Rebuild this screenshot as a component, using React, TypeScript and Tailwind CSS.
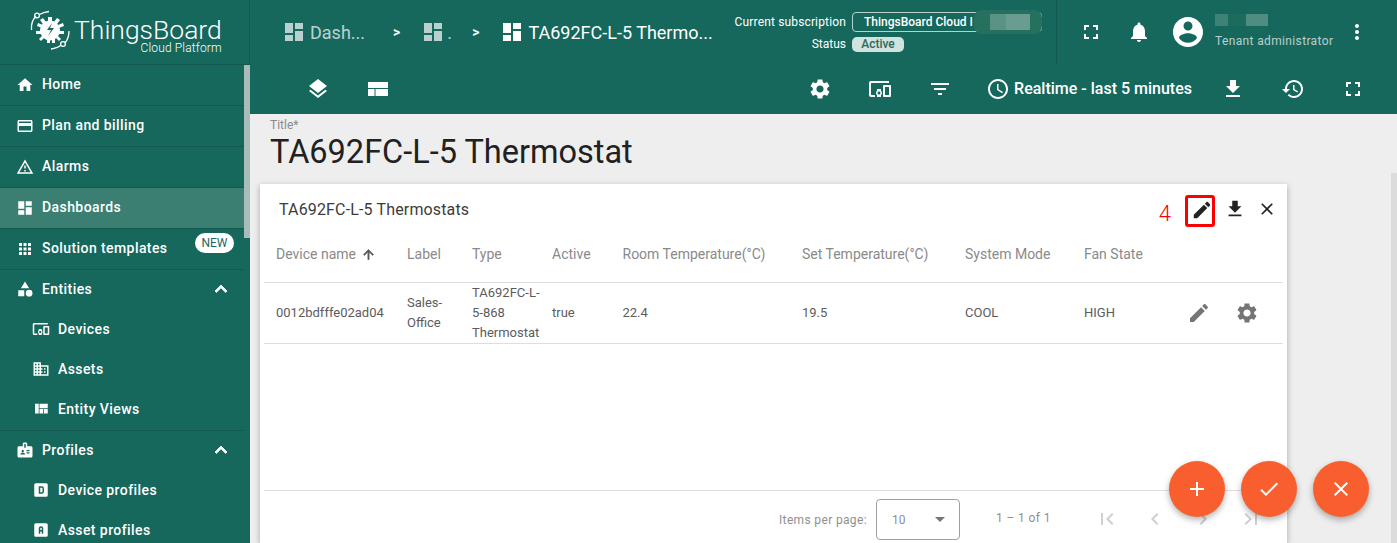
import React from "react";

const P = {
  home: "M10 20v-6h4v6h5v-8h3L12 3 2 12h3v8z",
  card: "M20 4H4c-1.11 0-1.99.89-1.99 2L2 18c0 1.11.89 2 2 2h16c1.11 0 2-.89 2-2V6c0-1.11-.89-2-2-2zm0 14H4v-6h16v6zm0-10H4V6h16v2z",
  warn: "M12 5.99L19.53 19H4.47L12 5.99M12 2L1 21h22L12 2zm1 14h-2v2h2v-2zm0-6h-2v4h2v-4z",
  dash: "M3 13h8V3H3v10zm0 8h8v-6H3v6zm10 0h8V11h-8v10zm0-18v6h8V3h-8z",
  grid: "M4 4h4v4H4zM10 4h4v4h-4zM16 4h4v4h-4zM4 10h4v4H4zM10 10h4v4h-4zM16 10h4v4h-4zM4 16h4v4H4zM10 16h4v4h-4zM16 16h4v4h-4z",
  category: "M12 2l-5.5 9h11zM17.5 13a4.5 4.5 0 1 0 0 9 4.5 4.5 0 0 0 0-9zM3 13.5h8v8H3z",
  devices: "M3 6h18V4H3c-1.1 0-2 .9-2 2v12c0 1.1.9 2 2 2h4v-2H3V6zm10 6H9v1.78c-.61.55-1 1.33-1 2.22s.39 1.67 1 2.22V20h4v-1.78c.61-.55 1-1.34 1-2.22s-.39-1.67-1-2.22V12zm-2 5.5c-.83 0-1.5-.67-1.5-1.5s.67-1.5 1.5-1.5 1.5.67 1.5 1.5-.67 1.5-1.5 1.5zM22 8h-6c-.5 0-1 .5-1 1v10c0 .5.5 1 1 1h6c.5 0 1-.5 1-1V9c0-.5-.5-1-1-1zm-1 10h-4v-8h4v8z",
  domain: "M12 7V3H2v18h20V7H12zM6 19H4v-2h2v2zm0-4H4v-2h2v2zm0-4H4V9h2v2zm0-4H4V5h2v2zm4 12H8v-2h2v2zm0-4H8v-2h2v2zm0-4H8V9h2v2zm0-4H8V5h2v2zm10 12h-8v-2h2v-2h-2v-2h2v-2h-2V9h8v10zm-2-8h-2v2h2v-2zm0 4h-2v2h2v-2z",
  quilt: "M10 18h5v-6h-5v6zm-6 0h5V5H4v13zm12 0h5v-6h-5v6zM10 5v6h11V5H10z",
  badge: "M20 7h-5V4c0-1.1-.9-2-2-2h-2c-1.1 0-2 .9-2 2v3H4c-1.1 0-2 .9-2 2v11c0 1.1.9 2 2 2h16c1.1 0 2-.9 2-2V9c0-1.1-.9-2-2-2zM9 12c.83 0 1.5.67 1.5 1.5S9.83 15 9 15s-1.5-.67-1.5-1.5S8.17 12 9 12zm3 6H6v-.75c0-1 2-1.5 3-1.5s3 .5 3 1.5V18zm1-9h-2V4h2v5zm5 7.5h-4V15h4v1.5zm0-3h-4V12h4v1.5z",
  profileD: "M5 3h14a2 2 0 0 1 2 2v14a2 2 0 0 1-2 2H5a2 2 0 0 1-2-2V5a2 2 0 0 1 2-2zm4 4v10h4a3 3 0 0 0 3-3v-4a3 3 0 0 0-3-3H9zm2 2h2a1 1 0 0 1 1 1v4a1 1 0 0 1-1 1h-2V9z",
  profileA: "M5 3h14a2 2 0 0 1 2 2v14a2 2 0 0 1-2 2H5a2 2 0 0 1-2-2V5a2 2 0 0 1 2-2zm7 4a3 3 0 0 0-3 3v7h2v-3h2v3h2v-7a3 3 0 0 0-3-3zm-1 5v-2a1 1 0 0 1 2 0v2h-2z",
  less: "M12 8l-6 6 1.41 1.41L12 10.83l4.59 4.58L18 14z",
  layers: "M11.99 18.54l-7.37-5.73L3 14.07l9 7 9-7-1.63-1.27-7.38 5.74zM12 16l7.36-5.73L21 9l-9-7-9 7 1.63 1.27L12 16z",
  layout: "M2 5h20v6H2zM2 12h6.5v7H2zM9.5 12H22v7H9.5z",
  settings: "M19.14 12.94c.04-.3.06-.61.06-.94 0-.32-.02-.64-.07-.94l2.03-1.58c.18-.14.23-.41.12-.61l-1.92-3.32c-.12-.22-.37-.29-.59-.22l-2.39.96c-.5-.38-1.03-.7-1.62-.94l-.36-2.54c-.04-.24-.24-.41-.48-.41h-3.84c-.24 0-.43.17-.47.41l-.36 2.54c-.59.24-1.13.57-1.62.94l-2.39-.96c-.22-.08-.47 0-.59.22L2.74 8.87c-.12.21-.08.47.12.61l2.03 1.58c-.05.3-.09.63-.09.94s.02.64.07.94l-2.03 1.58c-.18.14-.23.41-.12.61l1.92 3.32c.12.22.37.29.59.22l2.39-.96c.5.38 1.03.7 1.62.94l.36 2.54c.05.24.24.41.48.41h3.84c.24 0 .44-.17.47-.41l.36-2.54c.59-.24 1.13-.56 1.62-.94l2.39.96c.22.08.47 0 .59-.22l1.92-3.32c.12-.22.07-.47-.12-.61l-2.01-1.58zM12 15.6c-1.98 0-3.6-1.62-3.6-3.6s1.62-3.6 3.6-3.6 3.6 1.62 3.6 3.6-1.62 3.6-3.6 3.6z",
  filter: "M10 18h4v-2h-4v2zM3 6v2h18V6H3zm3 7h12v-2H6v2z",
  schedule: "M11.99 2C6.47 2 2 6.48 2 12s4.47 10 9.99 10C17.52 22 22 17.52 22 12S17.52 2 11.99 2zM12 20c-4.42 0-8-3.58-8-8s3.58-8 8-8 8 3.58 8 8-3.58 8-8 8zm.5-13H11v6l5.25 3.15.75-1.23-4.5-2.67z",
  download: "M19 9h-4V3H9v6H5l7 7 7-7zM5 18v2h14v-2H5z",
  history: "M13 3c-4.97 0-9 4.03-9 9H1l3.89 3.89.07.14L9 12H6c0-3.87 3.13-7 7-7s7 3.13 7 7-3.13 7-7 7c-1.93 0-3.68-.79-4.94-2.06l-1.42 1.42C8.27 19.99 10.51 21 13 21c4.97 0 9-4.03 9-9s-4.03-9-9-9zm-1 5v5l4.28 2.54.72-1.21-3.5-2.08V8H12z",
  fullscreen: "M7 14H5v5h5v-2H7v-3zm-2-4h2V7h3V5H5v5zm12 7h-3v2h5v-5h-2v3zM14 5v2h3v3h2V5h-5z",
  bell: "M12 22c1.1 0 2-.9 2-2h-4c0 1.1.89 2 2 2zm6-6v-5c0-3.07-1.64-5.64-4.5-6.32V4c0-.83-.67-1.5-1.5-1.5s-1.5.67-1.5 1.5v.68C7.63 5.36 6 7.92 6 11v5l-2 2v1h16v-1l-2-2z",
  account: "M12 2C6.48 2 2 6.48 2 12s4.48 10 10 10 10-4.48 10-10S17.52 2 12 2zm0 3c1.66 0 3 1.34 3 3s-1.34 3-3 3-3-1.34-3-3 1.34-3 3-3zm0 14.2c-2.5 0-4.71-1.28-6-3.22.03-1.99 4-3.08 6-3.08 1.99 0 5.97 1.09 6 3.08-1.29 1.94-3.5 3.22-6 3.22z",
  more: "M12 8c1.1 0 2-.9 2-2s-.9-2-2-2-2 .9-2 2 .9 2 2 2zm0 2c-1.1 0-2 .9-2 2s.9 2 2 2 2-.9 2-2-.9-2-2-2zm0 6c-1.1 0-2 .9-2 2s.9 2 2 2 2-.9 2-2-.9-2-2-2z",
  edit: "M3 17.25V21h3.75L17.81 9.94l-3.75-3.75L3 17.25zM20.71 7.04c.39-.39.39-1.02 0-1.41l-2.34-2.34c-.39-.39-1.02-.39-1.41 0l-1.83 1.83 3.75 3.75 1.83-1.83z",
  close: "M19 6.41L17.59 5 12 10.59 6.41 5 5 6.41 10.59 12 5 17.59 6.41 19 12 13.41 17.59 19 19 17.59 13.41 12z",
  add: "M19 13h-6v6h-2v-6H5v-2h6V5h2v6h6v2z",
  check: "M9 16.17L4.83 12l-1.42 1.41L9 19 21 7l-1.41-1.41z",
  up: "M4 12l1.41 1.41L11 7.83V20h2V7.83l5.58 5.59L20 12l-8-8-8 8z",
  first: "M18.41 16.59L13.82 12l4.59-4.59L17 6l-6 6 6 6zM6 6h2v12H6z",
  prev: "M15.41 7.41L14 6l-6 6 6 6 1.41-1.41L10.83 12z",
  next: "M10 6L8.59 7.41 13.17 12l-4.58 4.59L10 18l6-6z",
  last: "M5.59 7.41L10.18 12l-4.59 4.59L7 18l6-6-6-6zM16 6h2v12h-2z",
};

function Icon({ d, className }: { d: string; className: string }) {
  return (
    <svg viewBox="0 0 24 24" fill="currentColor" className={"shrink-0 " + className}>
      <path d={d} />
    </svg>
  );
}

function Logo() {
  return (
    <svg viewBox="0 0 40 41" className="w-[40px] h-[41px] shrink-0 text-white" fill="none" stroke="currentColor">
      <path d="M1.5 20 C1 14 3 9 6 6" strokeWidth="1.3" />
      <circle cx="7" cy="5.5" r="2.4" strokeWidth="1.3" />
      <path d="M9.5 4.5 C12 3 15 2 19 1.5" strokeWidth="1.3" />
      <path d="M39 21 C39 26 37.5 30 35 33" strokeWidth="1.3" />
      <circle cx="33" cy="34" r="2.4" strokeWidth="1.3" />
      <path d="M30.5 35.5 C28 37.5 24.5 38.5 21 39" strokeWidth="1.3" />
      <g stroke="none" fill="currentColor">
        <circle cx="20" cy="20.5" r="10" />
        <path d="M18 7h4v5h-4zM10 10l3-2 3 4-3 2zM27 8l3 2-3 4-3-2zM7 16l1-3 5 2-1 3zM33 13l1 3-5 2-1-3zM6 21h5v3H6zM29 21h5v3h-5zM9 29l4-4 2 2-4 4zM31 29l-4-4-2 2 4 4zM17 29h3v4h-3zM22 29h3v4h-3z" />
      </g>
      <path d="M22 13l-5 7h4l-3 6 6-8h-4l2-5z" fill="#16675c" stroke="none" />
    </svg>
  );
}

function NavRow({ icon, label, sub, border, active, chevron, badge }: { icon: string; label: string; sub?: boolean; border?: boolean; active?: boolean; chevron?: boolean; badge?: boolean }) {
  return (
    <div className={"relative flex items-center gap-2 text-[14px] tracking-[0.42px] font-medium text-white shrink-0 " + (sub ? "h-[40px] pl-8 pb-[2px] " : "pl-4 ") + (border ? "h-[41px] border-b border-[#125a50] pb-px " : !sub ? "h-[40px] pb-[2px] " : "") + (active ? "bg-[#3a7f72]" : "")}>
      <Icon d={icon} className="w-[18px] h-[18px]" />
      <span>{label}</span>
      {chevron && <Icon d={P.less} className="w-[24px] h-[24px] ml-auto mr-[11px] stroke-current stroke-[0.8]" />}
      {badge && (
        <span className="absolute left-[195px] top-[4px] h-[20px] w-[39px] rounded-full bg-white text-[#1b6a5f] text-[12px] tracking-normal font-normal flex items-center justify-center">NEW</span>
      )}
    </div>
  );
}

function ToolBtn({ d }: { d: string }) {
  return (
    <div className="w-[60px] h-[50px] flex items-center justify-center">
      <Icon d={d} className="w-[24px] h-[24px]" />
    </div>
  );
}

const COLS = "grid grid-cols-[131px_65px_80px_70.5px_179.5px_163px_119px_1fr] pl-3";

export default function App() {
  return (
    <div className="relative flex w-[1397px] h-[543px] overflow-hidden bg-[#eeeeee] text-[#333] font-['Roboto',sans-serif]">
      {/* Sidebar */}
      <aside className="w-[250px] shrink-0 bg-[#16675c] flex flex-col text-white">
        <div className="h-[65px] shrink-0 border-b border-r border-[#125a50] flex items-start pl-[30px] pt-[10px] gap-[4px]">
          <Logo />
          <div className="flex flex-col items-end pt-[8px]">
            <span className="text-[26.5px] leading-[24px] font-light whitespace-nowrap">ThingsBoard</span>
            <span className="text-[12px] leading-[12px] font-light tracking-[0.15px] whitespace-nowrap">Cloud Platform</span>
          </div>
        </div>
        <div className="flex flex-1 min-h-0">
          <nav className="w-[244px] flex flex-col overflow-hidden">
            <NavRow icon={P.home} label="Home" border />
            <NavRow icon={P.card} label="Plan and billing" border />
            <NavRow icon={P.warn} label="Alarms" border />
            <NavRow icon={P.dash} label="Dashboards" border active />
            <NavRow icon={P.grid} label="Solution templates" border badge />
            <NavRow icon={P.category} label="Entities" chevron />
            <NavRow icon={P.devices} label="Devices" sub />
            <NavRow icon={P.domain} label="Assets" sub />
            <NavRow icon={P.quilt} label="Entity Views" sub />
            <div className="h-px shrink-0 bg-[#125a50]" />
            <NavRow icon={P.badge} label="Profiles" chevron />
            <NavRow icon={P.profileD} label="Device profiles" sub />
            <NavRow icon={P.profileA} label="Asset profiles" sub />
          </nav>
          <div className="w-[6px]">
            <div className="h-[173px] bg-[#a8bdb9]" />
          </div>
        </div>
      </aside>

      {/* Main */}
      <main className="flex-1 min-w-0 flex flex-col">
        <header className="h-[64px] shrink-0 bg-[#16675c] text-white flex items-center">
          <div className="flex items-center w-[806px] pl-[32px] pr-[14px] h-full">
            <div className="flex items-center gap-[4px] opacity-70">
              <Icon d={P.dash} className="w-[24px] h-[24px]" />
              <span className="text-[18px] w-[54px]">Dash...</span>
            </div>
            <span className="ml-[29px] text-[14px] font-bold">&gt;</span>
            <div className="ml-[21px] flex items-center gap-[2px] opacity-70">
              <Icon d={P.dash} className="w-[24px] h-[24px]" />
              <span className="text-[18px] w-[7px] overflow-hidden">.</span>
            </div>
            <span className="ml-[18px] text-[14px] font-bold">&gt;</span>
            <div className="ml-[21px] flex items-center gap-[4px]">
              <Icon d={P.dash} className="w-[24px] h-[24px]" />
              <span className="text-[18px] whitespace-nowrap">TA692FC-L-5 Thermo...</span>
            </div>
            <div className="ml-auto flex flex-col items-end w-[320px] gap-[3px]">
              <div className="flex items-center gap-[6px] text-[12px]">
                <span className="tracking-[0.15px] whitespace-nowrap">Current subscription</span>
                <span className="relative w-[190px] h-[20px] border border-[#b9d1cc] rounded-[4px] pl-[11px] text-[12px] font-medium leading-[18px]">
                  ThingsBoard Cloud I
                  <span className="absolute left-[121px] top-[-3px] w-[68px] h-[24px] rounded-[8px] bg-[#25705f] flex items-center">
                    <span className="ml-[16px] h-[16px] w-[16px] bg-[#5b9286]" />
                    <span className="h-[16px] w-[24px] bg-[#699d92]" />
                  </span>
                </span>
              </div>
              <div className="flex items-center gap-[6px] text-[12px] w-[254px] justify-end pr-0">
                <span>Status</span>
                <span className="w-[190px]">
                  <span className="inline-block w-[52px] h-[15px] rounded-[5px] bg-[#cfe4df] text-[#2f665b] text-[12px] font-medium leading-[15px] text-center">Active</span>
                </span>
              </div>
            </div>
          </div>
          <div className="w-px h-full bg-[#125a50]" />
          <div className="flex-1 flex items-center h-full relative">
            <div className="w-[68px] flex justify-center">
              <Icon d={P.fullscreen} className="w-[24px] h-[24px]" />
            </div>
            <div className="w-[28px] flex justify-center">
              <Icon d={P.bell} className="w-[24px] h-[24px]" />
            </div>
            <Icon d={P.account} className="w-[36px] h-[36px] ml-[17px]" />
            <div className="ml-[9px] flex flex-col w-[130px]">
              <span className="flex h-[12px] items-center mb-[7px] -mt-[1px]">
                <span className="h-[12px] w-[13px] bg-[#3e8275]" />
                <span className="h-[12px] w-[18px] bg-[#1c6b5f]" />
                <span className="h-[12px] w-[22px] bg-[#4f8d80]" />
              </span>
              <span className="text-[12px] leading-[16px] tracking-[0.36px] text-white/70 whitespace-nowrap">Tenant administrator</span>
            </div>
            <Icon d={P.more} className="w-[24px] h-[24px]" />
          </div>
        </header>

        <div className="h-[50px] shrink-0 bg-[#16675c] text-white flex items-center pl-[38px] pr-[14px]">
          <ToolBtn d={P.layers} />
          <ToolBtn d={P.layout} />
          <div className="ml-auto flex items-center">
            <ToolBtn d={P.settings} />
            <ToolBtn d={P.devices} />
            <ToolBtn d={P.filter} />
            <div className="flex items-center gap-[4px] ml-[16px] mr-[11px] text-[16px] font-medium whitespace-nowrap">
              <Icon d={P.schedule} className="w-[24px] h-[24px]" />
              Realtime - last 5 minutes
            </div>
            <ToolBtn d={P.download} />
            <ToolBtn d={P.history} />
            <ToolBtn d={P.fullscreen} />
          </div>
        </div>

        <div className="pl-[20px] pt-[4px] h-[70px] shrink-0">
          <div className="text-[12px] leading-[14px] text-[#8a8a8a]">Title*</div>
          <div className="text-[32.5px] leading-[36px] font-[450] text-[#212121] mt-[2px] whitespace-nowrap">TA692FC-L-5 Thermostat</div>
        </div>

        <section className="ml-[10px] w-[1027px] flex-1 min-h-0 bg-white shadow-[0_2px_6px_rgba(0,0,0,0.3)] flex flex-col px-[4px] text-[13px] text-[#5c5c5c]">
          <div className="h-[46px] shrink-0 flex items-center relative">
            <span className="ml-[15px] mt-[6px] text-[16px] tracking-[0.15px] text-[#3c3c3c]">TA692FC-L-5 Thermostats</span>
            <span className="ml-auto text-[22px] font-light text-[#ff0000] mt-[12px] mr-[14px]">4</span>
            <span className="w-[30px] h-[32px] mt-[8px] border-[3px] border-[#ff0000] rounded-[3px] flex items-center justify-center mr-[8px] text-[#222]">
              <Icon d={P.edit} className="w-[22px] h-[22px] ml-[3px] mb-[3px]" />
            </span>
            <span className="w-[24px] mt-[4px] flex justify-center mr-[8px] text-[#222]">
              <Icon d={P.download} className="w-[22px] h-[22px]" />
            </span>
            <span className="w-[24px] mt-[4px] flex justify-center mr-[4px] text-[#222]">
              <Icon d={P.close} className="w-[20px] h-[20px]" />
            </span>
          </div>

          <div className={COLS + " h-[53px] shrink-0 items-center pb-[4px] text-[14px] text-[#8a8a8a] border-b border-[#dedede]"}>
            <span className="flex items-center gap-[5px]">Device name <Icon d={P.up} className="w-[15px] h-[15px] text-[#5a5a5a] stroke-current stroke-1" /></span>
            <span>Label</span>
            <span>Type</span>
            <span>Active</span>
            <span>Room Temperature(°C)</span>
            <span>Set Temperature(°C)</span>
            <span>System Mode</span>
            <span>Fan State</span>
          </div>

          <div className={COLS + " h-[61px] shrink-0 items-center border-b border-[#dedede] leading-[20px]"}>
            <span>0012bdfffe02ad04</span>
            <span className="pr-[12px]">Sales-Office</span>
            <span className="pr-[8px]">TA692FC-L-5-868 Thermostat</span>
            <span>true</span>
            <span>22.4</span>
            <span>19.5</span>
            <span>COOL</span>
            <span className="flex items-center">
              HIGH
              <Icon d={P.edit} className="w-[24px] h-[24px] ml-[72px] text-[#757575]" />
              <Icon d={P.settings} className="w-[24px] h-[24px] ml-[24px] text-[#757575]" />
            </span>
          </div>

          <div className="flex-1 min-h-[146px]" />

          <div className="h-[53px] shrink-0 border-t border-[#dedede] flex items-center text-[12px] text-[#8f8f8f] pl-[515px]">
            <span className="tracking-[0.35px] mt-[6px] whitespace-nowrap">Items per page:</span>
            <span className="ml-[9px] mt-[5px] w-[84px] h-[41px] border border-[#a0a0a0] rounded-[4px] flex items-center justify-between pl-[15px] pr-[14px]">
              <span>10</span>
              <span className="w-0 h-0 border-x-[5px] border-x-transparent border-t-[5px] border-t-[#757575]" />
            </span>
            <span className="ml-[36px] mt-[2px] tracking-[0.4px] whitespace-nowrap">1 – 1 of 1</span>
            <span className="ml-[32px] mt-[4px] flex text-[#cfcfcf]">
              <span className="w-[48px] flex justify-center"><Icon d={P.first} className="w-[24px] h-[24px]" /></span>
              <span className="w-[48px] flex justify-center"><Icon d={P.prev} className="w-[24px] h-[24px]" /></span>
              <span className="w-[48px] flex justify-center"><Icon d={P.next} className="w-[24px] h-[24px]" /></span>
              <span className="w-[48px] flex justify-center"><Icon d={P.last} className="w-[24px] h-[24px]" /></span>
            </span>
          </div>
        </section>
      </main>

      {/* Main scrollbar (overlay) */}
      <div className="absolute right-0 top-[173px] bottom-0 w-[6px] bg-[#dcdcdc]" />

      {/* Floating actions (overlay) */}
      <div className="absolute left-[1169px] top-[461px] flex gap-[16px]">
        {[P.add, P.check, P.close].map((d) => (
          <div key={d} className="w-[56px] h-[56px] rounded-full bg-[#f95f2e] text-white flex items-center justify-center shadow-[0_3px_6px_rgba(0,0,0,0.3)]">
            <Icon d={d} className="w-[24px] h-[24px]" />
          </div>
        ))}
      </div>
    </div>
  );
}
